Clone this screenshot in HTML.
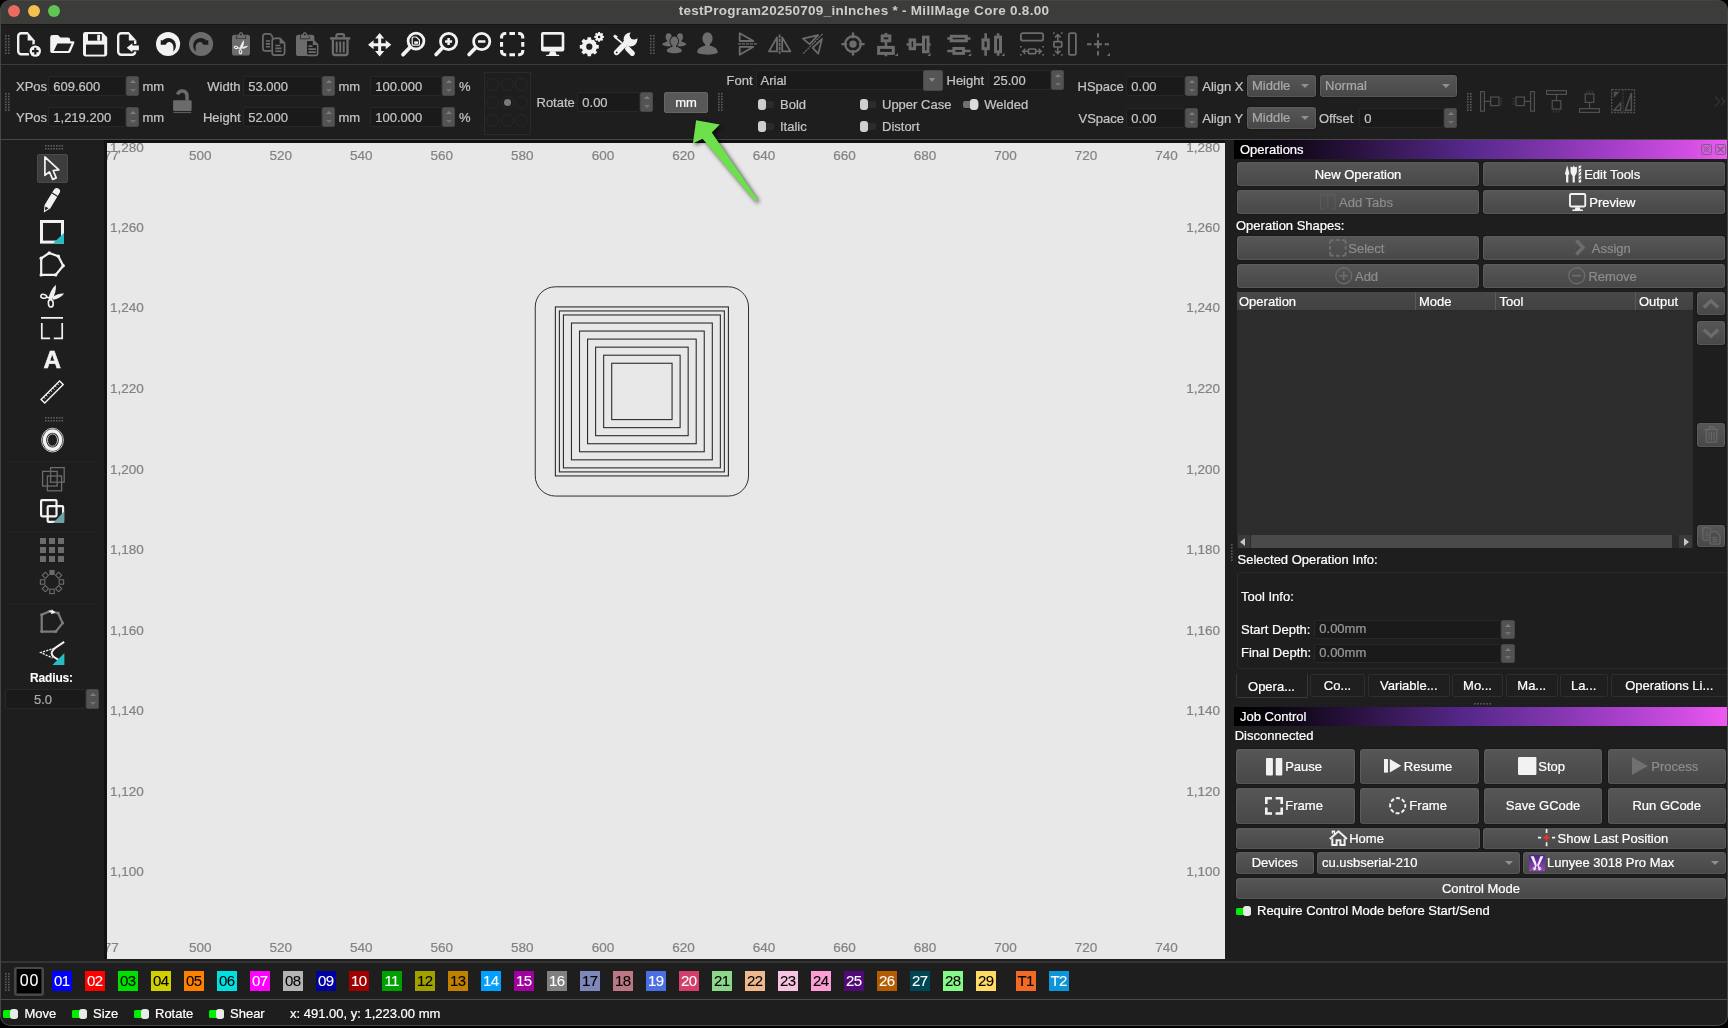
<!DOCTYPE html><html lang="en"><head><meta charset="utf-8"><title>MillMage Core</title><style>
*{box-sizing:border-box;margin:0;padding:0}
html,body{width:1728px;height:1028px;overflow:hidden;background:#000}
body{font-family:"Liberation Sans",sans-serif;font-size:13px;color:#fff;position:relative}
#win{will-change:transform;-webkit-text-stroke:0.22px;position:absolute;left:0;top:0;width:1728px;height:1025.6px;background:#1e1e1e;border-radius:10px 10px 10px 10px;overflow:hidden}
.a{position:absolute}
.t{position:absolute;white-space:nowrap;line-height:20px;height:20px}
.g{color:#c4c4c4}
.inp{position:absolute;background:#1a1a1a;border:1px solid #272727;border-radius:2px;color:#c4c4c4;line-height:19px;padding-left:4px;white-space:nowrap;overflow:hidden}
.sp{position:absolute;background:#535353;border-radius:2px;border:1px solid #474747}
.sp:before,.sp:after{content:"";position:absolute;left:50%;margin-left:-3px;border:3px solid transparent}
.sp:before{top:3px;border-bottom:3.5px solid #7e7e7e;border-top:0}
.sp:after{bottom:3px;border-top:3.5px solid #727272;border-bottom:0}
.btn{position:absolute;background:linear-gradient(#565656,#484848);border-radius:3px;border:1px solid #5d5d5d;border-bottom-color:#575757;box-shadow:0 0 0 1px #181818;color:#fff;display:flex;align-items:center;justify-content:center;white-space:nowrap}
.btn.d{color:#8c8c8c}
.cmb{position:absolute;background:linear-gradient(#565656,#484848);border-radius:3px;border:1px solid #5d5d5d;border-bottom-color:#575757;box-shadow:0 0 0 1px #181818;color:#a8a8a8;line-height:19px;padding-left:4px;white-space:nowrap}
.cmb:after{content:"";position:absolute;right:6px;top:8px;border:4px solid transparent;border-top:4px solid #909090;border-bottom:0}
.hdr{position:absolute;height:19px;background:linear-gradient(90deg,#000 0%,#09040d 8%,#2a1240 25%,#55288a 47%,#7a34a8 62%,#a83fcb 78%,#d24ee3 92%,#ee5af2 100%);line-height:19.5px;padding-left:6px;color:#fff}
.tg{position:absolute;width:16px;height:10.4px}
.tg:before{content:"";position:absolute;left:0.5px;right:0;top:1.5px;height:7.4px;border-radius:2px;background:#2c2c2c}
.tg i{position:absolute;left:0;top:0;width:8.4px;height:10.4px;border-radius:3px;background:#cfcfcf}
.tg.on:before{background:#707070}
.tg.on i{left:7.6px;background:#dcdcdc}
.tg.gr{width:15.6px}
.tg.gr:before{background:#00ee00;border-radius:1.5px}
.tg.gr i{left:7.4px;width:8.2px;background:#e6ebe6}
.rl{position:absolute;color:#838383;white-space:nowrap;line-height:16px;height:16px;font-size:13.5px;margin-top:0.7px}
.sw{position:absolute;top:971px;width:20px;height:20px;line-height:19.8px;text-align:center;font-size:15px;letter-spacing:-0.7px;text-indent:-0.7px;-webkit-text-stroke:0.1px}
.grip{position:absolute;background-image:radial-gradient(circle,#636363 0.85px,transparent 1.15px);background-size:3px 2.7px}
.tab{position:absolute;top:674.3px;height:22.3px;background:#1f1f1f;border:1px solid #2e2e2e;border-radius:2px;text-align:center;line-height:21px;color:#fff;white-space:nowrap}
svg{position:absolute;overflow:visible}
svg.il{position:relative;flex:none;display:block;margin-left:-3px}
</style></head><body><div id="win">
<div class="a" style="left:0;top:0;width:1728px;height:25px;background:#3c3c3a;border-bottom:1.5px solid #151515"></div>
<div class="a" style="left:8.1px;top:5px;width:12.4px;height:12.4px;border-radius:50%;background:#ed6a5e"></div>
<div class="a" style="left:28.0px;top:5px;width:12.4px;height:12.4px;border-radius:50%;background:#f5bf4f"></div>
<div class="a" style="left:48.0px;top:5px;width:12.4px;height:12.4px;border-radius:50%;background:#61c554"></div>
<div class="t" style="left:0;width:1728px;top:1px;text-align:center;font-weight:bold;color:#cdcdcd;font-size:13.5px;letter-spacing:0.28px;-webkit-text-stroke:0;line-height:20px">testProgram20250709_inInches * - MillMage Core 0.8.00</div>
<div class="a" style="left:0;top:64px;width:1728px;height:1px;background:#3c3c3c"></div>
<svg style="left:5.3px;top:35.0px" width="6.0" height="20.3" fill="#5c5c5c"><rect x="0.00" y="0.00" width="1.6" height="1.6"/><rect x="0.00" y="2.90" width="1.6" height="1.6"/><rect x="0.00" y="5.80" width="1.6" height="1.6"/><rect x="0.00" y="8.70" width="1.6" height="1.6"/><rect x="0.00" y="11.60" width="1.6" height="1.6"/><rect x="0.00" y="14.50" width="1.6" height="1.6"/><rect x="0.00" y="17.40" width="1.6" height="1.6"/><rect x="3.00" y="0.00" width="1.6" height="1.6"/><rect x="3.00" y="2.90" width="1.6" height="1.6"/><rect x="3.00" y="5.80" width="1.6" height="1.6"/><rect x="3.00" y="8.70" width="1.6" height="1.6"/><rect x="3.00" y="11.60" width="1.6" height="1.6"/><rect x="3.00" y="14.50" width="1.6" height="1.6"/><rect x="3.00" y="17.40" width="1.6" height="1.6"/></svg>
<svg style="left:650.3px;top:35.0px" width="6.0" height="20.3" fill="#5c5c5c"><rect x="0.00" y="0.00" width="1.6" height="1.6"/><rect x="0.00" y="2.90" width="1.6" height="1.6"/><rect x="0.00" y="5.80" width="1.6" height="1.6"/><rect x="0.00" y="8.70" width="1.6" height="1.6"/><rect x="0.00" y="11.60" width="1.6" height="1.6"/><rect x="0.00" y="14.50" width="1.6" height="1.6"/><rect x="0.00" y="17.40" width="1.6" height="1.6"/><rect x="3.00" y="0.00" width="1.6" height="1.6"/><rect x="3.00" y="2.90" width="1.6" height="1.6"/><rect x="3.00" y="5.80" width="1.6" height="1.6"/><rect x="3.00" y="8.70" width="1.6" height="1.6"/><rect x="3.00" y="11.60" width="1.6" height="1.6"/><rect x="3.00" y="14.50" width="1.6" height="1.6"/><rect x="3.00" y="17.40" width="1.6" height="1.6"/></svg>
<svg style="left:17.3px;top:32px" width="25" height="25" viewBox="0 0 25 25"><path d="M11,1.2H4.2a3,3 0 0 0 -3,3V19.3a3,3 0 0 0 3,3H12 M16.6,8V13" fill="none" stroke="#f2f2f2" stroke-width="2.4"/><path d="M10.6,0.1L17.8,8.4H10.6Z" fill="#f2f2f2"/><circle cx="18.3" cy="19.1" r="7" fill="#1e1e1e"/><circle cx="18.3" cy="19.1" r="5.7" fill="#f2f2f2"/><path d="M18.3,15.8v6.6M15,19.1h6.6" stroke="#1e1e1e" stroke-width="2.2" fill="none"/></svg><svg style="left:50.1px;top:32px" width="25" height="25" viewBox="0 0 25 25"><path d="M0.2,5.4a2.4,2.4 0 0 1 2.4,-2.4H8l2.4,2.6H17.8a2.4,2.4 0 0 1 2.4,2.4V9.3H23.2a1.2,1.2 0 0 1 1.1,1.7L20.4,20a1.8,1.8 0 0 1 -1.6,1.1H2a1.8,1.8 0 0 1 -1.8,-1.8Z" fill="#f2f2f2"/><path d="M7.4,11.6H21.6L18.2,19H3.8Z" fill="#1e1e1e"/></svg><svg style="left:83.2px;top:32px" width="25" height="25" viewBox="0 0 25 25"><path d="M2.4,0H19L24.2,5.2V22a2.4,2.4 0 0 1 -2.4,2.4H2.4A2.4,2.4 0 0 1 0,22V2.4A2.4,2.4 0 0 1 2.4,0Z" fill="#f2f2f2"/><rect x="5" y="2.1" width="13.8" height="6.6" fill="#1e1e1e"/><rect x="14.2" y="2.8" width="2.9" height="5.9" fill="#f2f2f2"/><rect x="3" y="12.6" width="18.2" height="10" fill="#1e1e1e"/></svg><svg style="left:117.3px;top:32px" width="25" height="25" viewBox="0 0 25 25"><path d="M12,1.2H4.2a3,3 0 0 0 -3,3V19.8a3,3 0 0 0 3,3H15.2a3,3 0 0 0 3,-3V19.5 M18.2,8.6V12" fill="none" stroke="#f2f2f2" stroke-width="2.4"/><path d="M11.8,0.1L19.4,8.6H11.8Z" fill="#f2f2f2"/><path d="M9.7,15.8L15.4,11.3V13.4H21.9v4.8H15.4V20.3Z" fill="#f2f2f2" stroke="#1e1e1e" stroke-width="1.6" paint-order="stroke" stroke-linejoin="round"/></svg><svg style="left:156.15px;top:32px" width="25" height="25" viewBox="0 0 25 25"><circle cx="12.05" cy="12" r="12.05" fill="#f2f2f2"/><path d="M4.85,8.07L4.67,12.74L9.69,12.74C10.5,11 11.6,9.9 12.9,9.9C15.6,9.9 17.6,12.4 17.4,15.6C17.4,17 17.4,18.5 17.4,19.7C19,17.8 20,15.6 19.9,13.4C19.6,9 16.4,6.1 12.2,6.1C10,6.1 8,7 6.6,8.6Z" fill="#1e1e1e"/></svg><svg style="left:189.15px;top:32px" width="25" height="25" viewBox="0 0 25 25"><circle cx="12.05" cy="12" r="12.05" fill="#6c6c6c"/><path d="M4.85,8.07L4.67,12.74L9.69,12.74C10.5,11 11.6,9.9 12.9,9.9C15.6,9.9 17.6,12.4 17.4,15.6C17.4,17 17.4,18.5 17.4,19.7C19,17.8 20,15.6 19.9,13.4C19.6,9 16.4,6.1 12.2,6.1C10,6.1 8,7 6.6,8.6Z" fill="#1e1e1e" transform="translate(24.1,0) scale(-1,1)"/></svg><svg style="left:231.95px;top:32.2px" width="20" height="25" viewBox="0 0 20 25"><rect x="0" y="2.8" width="18" height="20.8" rx="2.6" fill="#6c6c6c"/><path d="M4.6,6.4L5.4,2.6H6.8a2.2,2.6 0 0 1 4.4,0h1.4L13.4,6.4Z" fill="#6c6c6c" stroke="#1e1e1e" stroke-width="1.1" paint-order="stroke" stroke-linejoin="round"/><circle cx="9" cy="2.4" r="0.9" fill="#1e1e1e"/><path d="M12,8C9.9,10.3 8.6,13.2 7.9,15.9L9.9,16.7C11.4,14 12.2,11.2 12,8Z" fill="#f2f2f2"/><path d="M16.1,13.8C13.9,13.8 12,14.6 10.2,15.5L10.7,17C13,16.5 14.8,15.6 16.1,13.8Z" fill="#f2f2f2"/><ellipse cx="3.95" cy="15.4" rx="1.7" ry="1.15" fill="none" stroke="#f2f2f2" stroke-width="1.1" transform="rotate(12 3.95 15.4)"/><ellipse cx="8.45" cy="19.7" rx="1.3" ry="1.9" fill="none" stroke="#f2f2f2" stroke-width="1.1" transform="rotate(-8 8.45 19.7)"/><path d="M5.6,15.9L8.8,16.3M8.3,17.7L8.9,16.2" stroke="#f2f2f2" stroke-width="1.2" fill="none"/></svg><svg style="left:262.3px;top:32.7px" width="25" height="25" viewBox="0 0 25 25"><path d="M7,0.9H3.3a2.4,2.4 0 0 0 -2.4,2.4V15.5a2.4,2.4 0 0 0 2.4,2.4H9.4" fill="none" stroke="#6c6c6c" stroke-width="1.7"/><path d="M7,0.9C8.4,1 9.2,1.6 9.8,2.6" fill="none" stroke="#6c6c6c" stroke-width="1.7"/><path d="M8.3,3.8L11.4,2.2L10.9,5.3Z" fill="#6c6c6c"/><path d="M3.9,8h4.2M3.9,10.9h4.2M3.9,13.8h4.2" stroke="#6c6c6c" stroke-width="1.6"/><path d="M18.0,5.4H12.6a2.4,2.4 0 0 0 -2.4,2.4V19.800000000000004a2.4,2.4 0 0 0 2.4,2.4H20.200000000000003a2.4,2.4 0 0 0 2.4,-2.4V10.0Z" fill="#1e1e1e" stroke="#6c6c6c" stroke-width="1.7" stroke-linejoin="round"/><path d="M17.6,5.4V10.4H22.6Z" fill="#6c6c6c"/><path d="M13.299999999999999,12.456h5.0M13.299999999999999,15.356h6.2M13.299999999999999,18.256h6.2" stroke="#6c6c6c" stroke-width="1.6" fill="none"/></svg><svg style="left:296.1px;top:32px" width="24" height="25" viewBox="0 0 24 25"><rect x="0" y="2.8" width="18.4" height="21.2" rx="2.6" fill="#6c6c6c"/><path d="M4.4,6.6L5.2,2.6H6.6a2.2,2.6 0 0 1 4.4,0h1.4L13.2,6.6Z" fill="#6c6c6c" stroke="#1e1e1e" stroke-width="1.1" paint-order="stroke" stroke-linejoin="round"/><circle cx="8.8" cy="2.4" r="0.9" fill="#1e1e1e"/><path d="M17.2,8.2H11.8a1.6,1.6 0 0 0 -1.6,1.6V21.8a1.6,1.6 0 0 0 1.6,1.6H20a1.6,1.6 0 0 0 1.6,-1.6V12.6Z" fill="#1e1e1e" stroke="#6c6c6c" stroke-width="1.6" stroke-linejoin="round"/><path d="M16.8,8.2V13H21.6Z" fill="#6c6c6c"/><path d="M12.4,14.2h4M12.4,17.2h7.4M12.4,20.2h7.4" stroke="#6c6c6c" stroke-width="1.7"/></svg><svg style="left:330.3px;top:32.8px" width="21" height="24" viewBox="0 0 21 24"><path d="M0.1,5.4H20.3" fill="none" stroke="#6c6c6c" stroke-width="2.5"/><path d="M6.4,4.4V2.8a1.6,1.6 0 0 1 1.6,-1.6H12.4a1.6,1.6 0 0 1 1.6,1.6V4.4" fill="none" stroke="#6c6c6c" stroke-width="2.3"/><path d="M2.9,6.6V20a2,2 0 0 0 2,2H15.5a2,2 0 0 0 2,-2V6.6" fill="none" stroke="#6c6c6c" stroke-width="2.3"/><path d="M6.7,8.6V19.4M10.2,8.6V19.4M13.7,8.6V19.4" stroke="#6c6c6c" stroke-width="2"/></svg><svg style="left:368.4px;top:32.5px" width="24" height="24" viewBox="0 0 24 24"><path d="M11.65,3V20.5M3,11.75H20.4" stroke="#f2f2f2" stroke-width="3"/><path d="M11.65,0L16.2,5.6H7.1ZM11.65,23.5L16.2,17.9H7.1ZM0,11.75L5.6,7.2V16.3ZM23.3,11.75L17.7,7.2V16.3Z" fill="#f2f2f2"/></svg><svg style="left:401px;top:32px" width="25" height="25" viewBox="0 0 25 25"><circle cx="15" cy="9.1" r="7.9" fill="none" stroke="#f2f2f2" stroke-width="2.8"/><line x1="9.10" y1="15.22" x2="2" y2="22.6" stroke="#f2f2f2" stroke-width="3.7" stroke-linecap="round"/><path d="M12.2,5H15.4L18.4,8V12.2a1,1 0 0 1 -1,1H12.2a1,1 0 0 1 -1,-1V6a1,1 0 0 1 1,-1Z" fill="none" stroke="#f2f2f2" stroke-width="1.2"/><path d="M13.2,9.4h3.8v2.4h-3.8z" fill="#f2f2f2"/></svg><svg style="left:434px;top:32px" width="25" height="25" viewBox="0 0 25 25"><circle cx="14.6" cy="9.5" r="8.1" fill="none" stroke="#f2f2f2" stroke-width="2.8"/><line x1="8.57" y1="15.77" x2="2.1" y2="22.5" stroke="#f2f2f2" stroke-width="3.7" stroke-linecap="round"/><path d="M14.6,6v7M11.1,9.5h7" stroke="#f2f2f2" stroke-width="2.5"/></svg><svg style="left:466.9px;top:32px" width="25" height="25" viewBox="0 0 25 25"><circle cx="14.7" cy="9.5" r="8.1" fill="none" stroke="#f2f2f2" stroke-width="2.8"/><line x1="8.65" y1="15.75" x2="2.1" y2="22.5" stroke="#f2f2f2" stroke-width="3.7" stroke-linecap="round"/><path d="M11,9.5h7.4" stroke="#f2f2f2" stroke-width="2.5"/></svg><svg style="left:500px;top:32px" width="25" height="25" viewBox="0 0 25 25"><path d="M1.55,6.6V5a3.45,3.45 0 0 1 3.45,-3.45H6.2M9.4,1.55H15M18.1,1.55H19.3a3.45,3.45 0 0 1 3.45,3.45V6.6M22.75,10.1V14.7M22.75,18V19.3a3.45,3.45 0 0 1 -3.45,3.45H18.1M15,22.75H9.4M6.2,22.75H5a3.45,3.45 0 0 1 -3.45,-3.45V18M1.55,14.7V10.1" fill="none" stroke="#f2f2f2" stroke-width="3.1"/></svg><svg style="left:540.6px;top:31.9px" width="24" height="25" viewBox="0 0 24 25"><rect x="0" y="0" width="23.3" height="19.5" rx="2" fill="#f2f2f2"/><rect x="2.5" y="2.7" width="18.2" height="12" fill="#1e1e1e"/><path d="M9.2,19.3H14.4L15.6,22.7H17.6a0.7,0.7 0 0 1 0,1.4H5.8a0.7,0.7 0 0 1 0,-1.4H7.8Z" fill="#f2f2f2"/></svg><svg style="left:579px;top:31px" width="28" height="27" viewBox="0 0 28 27"><path d="M-2.80,0L-1.70,-9.50H1.70L2.80,0Z" transform="translate(10.3 15.7) rotate(0.0)" fill="#f2f2f2"/><path d="M-2.80,0L-1.70,-9.50H1.70L2.80,0Z" transform="translate(10.3 15.7) rotate(45.0)" fill="#f2f2f2"/><path d="M-2.80,0L-1.70,-9.50H1.70L2.80,0Z" transform="translate(10.3 15.7) rotate(90.0)" fill="#f2f2f2"/><path d="M-2.80,0L-1.70,-9.50H1.70L2.80,0Z" transform="translate(10.3 15.7) rotate(135.0)" fill="#f2f2f2"/><path d="M-2.80,0L-1.70,-9.50H1.70L2.80,0Z" transform="translate(10.3 15.7) rotate(180.0)" fill="#f2f2f2"/><path d="M-2.80,0L-1.70,-9.50H1.70L2.80,0Z" transform="translate(10.3 15.7) rotate(225.0)" fill="#f2f2f2"/><path d="M-2.80,0L-1.70,-9.50H1.70L2.80,0Z" transform="translate(10.3 15.7) rotate(270.0)" fill="#f2f2f2"/><path d="M-2.80,0L-1.70,-9.50H1.70L2.80,0Z" transform="translate(10.3 15.7) rotate(315.0)" fill="#f2f2f2"/><circle cx="10.3" cy="15.7" r="7.5" fill="#f2f2f2"/><circle cx="10.3" cy="15.7" r="3.1" fill="#1e1e1e"/><circle cx="20.1" cy="5.9" r="6" fill="#1e1e1e"/><path d="M-1.60,0L-0.90,-4.90H0.90L1.60,0Z" transform="translate(20.1 5.9) rotate(0.0)" fill="#f2f2f2"/><path d="M-1.60,0L-0.90,-4.90H0.90L1.60,0Z" transform="translate(20.1 5.9) rotate(45.0)" fill="#f2f2f2"/><path d="M-1.60,0L-0.90,-4.90H0.90L1.60,0Z" transform="translate(20.1 5.9) rotate(90.0)" fill="#f2f2f2"/><path d="M-1.60,0L-0.90,-4.90H0.90L1.60,0Z" transform="translate(20.1 5.9) rotate(135.0)" fill="#f2f2f2"/><path d="M-1.60,0L-0.90,-4.90H0.90L1.60,0Z" transform="translate(20.1 5.9) rotate(180.0)" fill="#f2f2f2"/><path d="M-1.60,0L-0.90,-4.90H0.90L1.60,0Z" transform="translate(20.1 5.9) rotate(225.0)" fill="#f2f2f2"/><path d="M-1.60,0L-0.90,-4.90H0.90L1.60,0Z" transform="translate(20.1 5.9) rotate(270.0)" fill="#f2f2f2"/><path d="M-1.60,0L-0.90,-4.90H0.90L1.60,0Z" transform="translate(20.1 5.9) rotate(315.0)" fill="#f2f2f2"/><circle cx="20.1" cy="5.9" r="3.6" fill="#f2f2f2"/><circle cx="20.1" cy="5.9" r="1.25" fill="#1e1e1e"/></svg><svg style="left:613px;top:32px" width="25" height="25" viewBox="0 0 25 25"><defs><mask id="wm" maskUnits="userSpaceOnUse" x="-5" y="-5" width="40" height="40"><rect x="-2" y="-2" width="30" height="30" fill="#fff"/><circle cx="21" cy="3.2" r="4.3" fill="#000"/><circle cx="3.7" cy="20.4" r="0.9" fill="#000"/></mask></defs><g mask="url(#wm)"><path d="M3.7,20.4L15,8.6" stroke="#f2f2f2" stroke-width="5.6" stroke-linecap="round"/><circle cx="17.5" cy="7.5" r="6.9" fill="#f2f2f2"/></g><path d="M1.6,4.9L8.8,10.9" stroke="#f2f2f2" stroke-width="1.8"/><path d="M0.5,4.3L1.8,2.9L4.4,4.6L3,6.4Z" fill="#f2f2f2" stroke="#f2f2f2" stroke-width="0.8" stroke-linejoin="round"/><path d="M14.6,16.6L19.3,21.3" stroke="#f2f2f2" stroke-width="5.2" stroke-linecap="round"/></svg><svg style="left:662px;top:33.4px" width="25" height="22" viewBox="0 0 25 22"><ellipse cx="6.6" cy="4.0" rx="3" ry="3.7" fill="#6c6c6c"/><path d="M5.25,6.1V8.3C3.3999999999999995,9.5 0.1999999999999993,10.1 0.1999999999999993,11.3C2.12,14.100000000000001 11.079999999999998,14.100000000000001 13.0,11.3C13.0,10.1 9.8,9.5 7.949999999999999,8.3V6.1Z" fill="#6c6c6c"/><ellipse cx="18" cy="4.0" rx="3" ry="3.7" fill="#6c6c6c"/><path d="M16.65,6.1V8.3C14.8,9.5 11.6,10.1 11.6,11.3C13.52,14.100000000000001 22.48,14.100000000000001 24.4,11.3C24.4,10.1 21.2,9.5 19.35,8.3V6.1Z" fill="#6c6c6c"/><ellipse cx="12.3" cy="8.3" rx="3.9" ry="4.7" fill="#1e1e1e" stroke="#1e1e1e" stroke-width="1.8"/><path d="M10.545000000000002,11.4V13.6C8.5,14.8 4.700000000000001,15.4 4.700000000000001,18.2C6.980000000000001,21.0 17.62,21.0 19.9,18.2C19.9,15.4 16.1,14.8 14.055,13.6V11.4Z" fill="#1e1e1e" stroke="#1e1e1e" stroke-width="1.8"/><ellipse cx="12.3" cy="8.3" rx="3.9" ry="4.7" fill="#6c6c6c"/><path d="M10.545000000000002,11.4V13.6C8.5,14.8 4.700000000000001,15.4 4.700000000000001,18.2C6.980000000000001,21.0 17.62,21.0 19.9,18.2C19.9,15.4 16.1,14.8 14.055,13.6V11.4Z" fill="#6c6c6c"/></svg><svg style="left:696.9px;top:31.6px" width="22" height="25" viewBox="0 0 22 25"><ellipse cx="10.5" cy="6.5" rx="5.1" ry="6.3" fill="#6c6c6c"/><path d="M8.205,11.2V13.399999999999999C5.35,14.6 0.1999999999999993,15.2 0.1999999999999993,20.6C3.29,23.400000000000002 17.71,23.400000000000002 20.8,20.6C20.8,15.2 15.65,14.6 12.795,13.399999999999999V11.2Z" fill="#6c6c6c"/></svg><svg style="left:737.8px;top:32.3px" width="20" height="24" viewBox="0 0 20 24"><path d="M1.7,1.3V9H15.4ZM1.7,22.7V14.8H15.4Z" fill="none" stroke="#6c6c6c" stroke-width="1.8" stroke-linejoin="round"/><path d="M0,11.9H19" stroke="#6c6c6c" stroke-width="1.3" stroke-dasharray="3.2 0.8"/></svg><svg style="left:768.2px;top:32.3px" width="24" height="24" viewBox="0 0 24 24"><path d="M9,5.4V19.4H1ZM14.2,5.4V19.4H22.4Z" fill="none" stroke="#6c6c6c" stroke-width="1.8" stroke-linejoin="round"/><path d="M11.6,2.6V21.7" stroke="#6c6c6c" stroke-width="1.8" stroke-dasharray="3.4 0.7"/></svg><svg style="left:802px;top:32.3px" width="24" height="24" viewBox="0 0 24 24"><path d="M0.9,6.65L16.2,3.2L7.5,12.15ZM20,6.9L10.7,15.9L16.2,21.7Z" fill="none" stroke="#6c6c6c" stroke-width="1.7" stroke-linejoin="round"/><path d="M20.6,1.9L1.2,21.7" stroke="#6c6c6c" stroke-width="1.2" stroke-dasharray="2.4 0.8"/></svg><svg style="left:841px;top:32px" width="24" height="24" viewBox="0 0 24 24"><circle cx="12" cy="12.1" r="7.8" fill="none" stroke="#6c6c6c" stroke-width="2.4"/><circle cx="12" cy="12.1" r="3.7" fill="#6c6c6c"/><path d="M12,0.6V6.2M12,18V23.6M0.4,12.1H6.1M17.9,12.1H23.6" stroke="#6c6c6c" stroke-width="2.4"/></svg><svg style="left:877px;top:32.5px" width="22" height="24" viewBox="0 0 22 24"><path d="M8.95,-0.1V23.3" stroke="#6c6c6c" stroke-width="2.6"/><rect x="5.2" y="2.9" width="7.6" height="4.9" fill="#1e1e1e" stroke="#6c6c6c" stroke-width="3"/><rect x="1.6" y="14.4" width="14.7" height="6" fill="#1e1e1e" stroke="#6c6c6c" stroke-width="3"/><path d="M21,23.1V19.900000000000002L17.8,23.1Z" fill="#6c6c6c"/></svg><svg style="left:907.4px;top:32.5px" width="24" height="24" viewBox="0 0 24 24"><path d="M-0.4,11.5H23.6" stroke="#6c6c6c" stroke-width="2.6"/><rect x="3.1" y="6.9" width="4.5" height="8.8" fill="#1e1e1e" stroke="#6c6c6c" stroke-width="3"/><rect x="16.5" y="4.1" width="4.5" height="14.7" fill="#1e1e1e" stroke="#6c6c6c" stroke-width="3"/><path d="M23.6,23.1V19.900000000000002L20.400000000000002,23.1Z" fill="#6c6c6c"/></svg><svg style="left:946.9px;top:32.5px" width="24" height="24" viewBox="0 0 24 24"><path d="M0.3,5.5H23.5M0.3,18H23.5" stroke="#6c6c6c" stroke-width="2.6"/><rect x="4.2" y="3.3" width="15.1" height="4.5" fill="#1e1e1e" stroke="#6c6c6c" stroke-width="3"/><rect x="6.9" y="15.5" width="9.6" height="4.9" fill="#1e1e1e" stroke="#6c6c6c" stroke-width="3"/><path d="M24.2,23.1V19.900000000000002L21.0,23.1Z" fill="#6c6c6c"/></svg><svg style="left:981.3px;top:32.5px" width="24" height="24" viewBox="0 0 24 24"><path d="M4.65,0.3V22.7M17.1,0.3V22.7" stroke="#6c6c6c" stroke-width="2.6"/><rect x="2" y="6.9" width="5.3" height="8.8" fill="#1e1e1e" stroke="#6c6c6c" stroke-width="3"/><rect x="14.6" y="4.1" width="4.9" height="14.7" fill="#1e1e1e" stroke="#6c6c6c" stroke-width="3"/><path d="M23.6,23.1V19.900000000000002L20.400000000000002,23.1Z" fill="#6c6c6c"/></svg><svg style="left:1020px;top:32px" width="24" height="24" viewBox="0 0 24 24"><rect x="0.9" y="1.1" width="22.2" height="7.6" rx="2" fill="none" stroke="#6c6c6c" stroke-width="1.8"/><rect x="0" y="14" width="1.6" height="1.6" fill="#6c6c6c"/><rect x="22.4" y="14" width="1.6" height="1.6" fill="#6c6c6c"/><rect x="0" y="22" width="1.6" height="1.6" fill="#6c6c6c"/><rect x="22.4" y="22" width="1.6" height="1.6" fill="#6c6c6c"/><rect x="8.4" y="17" width="7.4" height="4.6" rx="0.8" fill="none" stroke="#6c6c6c" stroke-width="1.7"/><path d="M3,19.3H8M16,19.3H21M5.4,16.7L2.8,19.3L5.4,21.9M18.6,16.7L21.2,19.3L18.6,21.9" fill="none" stroke="#6c6c6c" stroke-width="1.5"/></svg><svg style="left:1053px;top:32px" width="24" height="24" viewBox="0 0 24 24"><rect x="0" y="0.3" width="1.6" height="1.6" fill="#6c6c6c"/><rect x="8" y="0.3" width="1.6" height="1.6" fill="#6c6c6c"/><rect x="0" y="22.2" width="1.6" height="1.6" fill="#6c6c6c"/><rect x="8" y="22.2" width="1.6" height="1.6" fill="#6c6c6c"/><rect x="0.9" y="9.6" width="7.8" height="5.4" rx="0.8" fill="none" stroke="#6c6c6c" stroke-width="1.7"/><path d="M4.8,2.6V9M4.8,15.6V21.6M2,5.4L4.8,2.6L7.6,5.4M2,18.8L4.8,21.6L7.6,18.8" fill="none" stroke="#6c6c6c" stroke-width="1.5"/><rect x="15.9" y="1.1" width="7" height="21.8" rx="1.5" fill="none" stroke="#6c6c6c" stroke-width="1.8"/></svg><svg style="left:1086px;top:32px" width="25" height="25" viewBox="0 0 25 25"><path d="M8,12.25H16M12,8.2V16.3" stroke="#6c6c6c" stroke-width="2.2"/><path d="M1,12.25H5.4M18.6,12.25H23M12,1.2V5.6M12,19V23.6" stroke="#6c6c6c" stroke-width="1.9"/><path d="M24,24V20.8L20.8,24Z" fill="#6c6c6c"/></svg>
<div class="a" style="left:0;top:139px;width:1728px;height:1px;background:#474747"></div>
<svg style="left:5.3px;top:93.0px" width="6.0" height="19.1" fill="#5c5c5c"><rect x="0.00" y="0.00" width="1.6" height="1.6"/><rect x="0.00" y="2.73" width="1.6" height="1.6"/><rect x="0.00" y="5.46" width="1.6" height="1.6"/><rect x="0.00" y="8.19" width="1.6" height="1.6"/><rect x="0.00" y="10.92" width="1.6" height="1.6"/><rect x="0.00" y="13.65" width="1.6" height="1.6"/><rect x="0.00" y="16.38" width="1.6" height="1.6"/><rect x="3.00" y="0.00" width="1.6" height="1.6"/><rect x="3.00" y="2.73" width="1.6" height="1.6"/><rect x="3.00" y="5.46" width="1.6" height="1.6"/><rect x="3.00" y="8.19" width="1.6" height="1.6"/><rect x="3.00" y="10.92" width="1.6" height="1.6"/><rect x="3.00" y="13.65" width="1.6" height="1.6"/><rect x="3.00" y="16.38" width="1.6" height="1.6"/></svg>
<svg style="left:718.3px;top:93.0px" width="6.0" height="19.1" fill="#5c5c5c"><rect x="0.00" y="0.00" width="1.6" height="1.6"/><rect x="0.00" y="2.73" width="1.6" height="1.6"/><rect x="0.00" y="5.46" width="1.6" height="1.6"/><rect x="0.00" y="8.19" width="1.6" height="1.6"/><rect x="0.00" y="10.92" width="1.6" height="1.6"/><rect x="0.00" y="13.65" width="1.6" height="1.6"/><rect x="0.00" y="16.38" width="1.6" height="1.6"/><rect x="3.00" y="0.00" width="1.6" height="1.6"/><rect x="3.00" y="2.73" width="1.6" height="1.6"/><rect x="3.00" y="5.46" width="1.6" height="1.6"/><rect x="3.00" y="8.19" width="1.6" height="1.6"/><rect x="3.00" y="10.92" width="1.6" height="1.6"/><rect x="3.00" y="13.65" width="1.6" height="1.6"/><rect x="3.00" y="16.38" width="1.6" height="1.6"/></svg>
<svg style="left:1467.3px;top:93.0px" width="6.0" height="19.1" fill="#5c5c5c"><rect x="0.00" y="0.00" width="1.6" height="1.6"/><rect x="0.00" y="2.73" width="1.6" height="1.6"/><rect x="0.00" y="5.46" width="1.6" height="1.6"/><rect x="0.00" y="8.19" width="1.6" height="1.6"/><rect x="0.00" y="10.92" width="1.6" height="1.6"/><rect x="0.00" y="13.65" width="1.6" height="1.6"/><rect x="0.00" y="16.38" width="1.6" height="1.6"/><rect x="3.00" y="0.00" width="1.6" height="1.6"/><rect x="3.00" y="2.73" width="1.6" height="1.6"/><rect x="3.00" y="5.46" width="1.6" height="1.6"/><rect x="3.00" y="8.19" width="1.6" height="1.6"/><rect x="3.00" y="10.92" width="1.6" height="1.6"/><rect x="3.00" y="13.65" width="1.6" height="1.6"/><rect x="3.00" y="16.38" width="1.6" height="1.6"/></svg>
<div class="t g" style="left:16px;top:76.5px;">XPos</div>
<div class="inp" style="left:48.3px;top:76px;width:77.7px;height:20px;">609.600</div>
<div class="sp" style="left:126px;top:76px;width:13px;height:20px"></div>
<div class="t g" style="left:142.5px;top:76.5px;">mm</div>
<div class="t g" style="left:16px;top:107.5px;">YPos</div>
<div class="inp" style="left:48.3px;top:107px;width:77.7px;height:20px;">1,219.200</div>
<div class="sp" style="left:126px;top:107px;width:13px;height:20px"></div>
<div class="t g" style="left:142.5px;top:107.5px;">mm</div>
<div class="t g" style="right:1487.5px;top:76.5px;">Width</div>
<div class="inp" style="left:243.3px;top:76px;width:78.7px;height:20px;">53.000</div>
<div class="sp" style="left:322px;top:76px;width:13px;height:20px"></div>
<div class="t g" style="left:338.5px;top:76.5px;">mm</div>
<div class="inp" style="left:370.3px;top:76px;width:71.7px;height:20px;">100.000</div>
<div class="sp" style="left:442px;top:76px;width:13px;height:20px"></div>
<div class="t g" style="left:459px;top:76.5px;">%</div>
<div class="t g" style="right:1487.5px;top:107.5px;">Height</div>
<div class="inp" style="left:243.3px;top:107px;width:78.7px;height:20px;">52.000</div>
<div class="sp" style="left:322px;top:107px;width:13px;height:20px"></div>
<div class="t g" style="left:338.5px;top:107.5px;">mm</div>
<div class="inp" style="left:370.3px;top:107px;width:71.7px;height:20px;">100.000</div>
<div class="sp" style="left:442px;top:107px;width:13px;height:20px"></div>
<div class="t g" style="left:459px;top:107.5px;">%</div>
<div class="a" style="left:484px;top:72px;width:47px;height:63px;border:1px solid #2a2a2a"></div>
<div class="a" style="left:486.1px;top:77.5px;width:13px;height:13px;border-radius:50%;border:1px solid #282828"></div>
<div class="a" style="left:486.1px;top:95.7px;width:13px;height:13px;border-radius:50%;border:1px solid #282828"></div>
<div class="a" style="left:486.1px;top:113.5px;width:13px;height:13px;border-radius:50%;border:1px solid #282828"></div>
<div class="a" style="left:500.5px;top:77.5px;width:13px;height:13px;border-radius:50%;border:1px solid #282828"></div>
<div class="a" style="left:500.5px;top:95.7px;width:13px;height:13px;border-radius:50%;border:1px solid #282828"></div>
<div class="a" style="left:500.5px;top:113.5px;width:13px;height:13px;border-radius:50%;border:1px solid #282828"></div>
<div class="a" style="left:514.8px;top:77.5px;width:13px;height:13px;border-radius:50%;border:1px solid #282828"></div>
<div class="a" style="left:514.8px;top:95.7px;width:13px;height:13px;border-radius:50%;border:1px solid #282828"></div>
<div class="a" style="left:514.8px;top:113.5px;width:13px;height:13px;border-radius:50%;border:1px solid #282828"></div>
<div class="a" style="left:503.5px;top:98.7px;width:7px;height:7px;border-radius:50%;background:#7a7a7a"></div>
<div class="t g" style="left:536.5px;top:92.5px;">Rotate</div>
<div class="inp" style="left:577.3px;top:92px;width:62.7px;height:20px;">0.00</div>
<div class="sp" style="left:640px;top:92px;width:13px;height:20px"></div>
<div class="btn" style="left:664px;top:91.5px;width:44px;height:21.5px;background:#585858;border-color:#666;box-shadow:none;border-radius:2px">mm</div>
<div class="t g" style="left:726.5px;top:70.5px;">Font</div>
<div class="inp" style="left:755.5px;top:70px;width:168px;height:20px">Arial</div>
<div class="a" style="left:923px;top:70px;width:20px;height:20.5px;background:#555;border:1px solid #484848;border-radius:2px"></div>
<div class="a" style="left:929.3px;top:78.4px;border:3.8px solid transparent;border-top:4px solid #8c8c8c;border-bottom:0"></div>
<div class="t g" style="left:946.5px;top:70.5px;">Height</div>
<div class="inp" style="left:988.3px;top:70px;width:62.7px;height:20px;">25.00</div>
<div class="sp" style="left:1051px;top:70px;width:13px;height:20px"></div>
<div class="tg " style="left:758px;top:99.3px"><i></i></div>
<div class="t g" style="left:780px;top:94.5px;">Bold</div>
<div class="tg " style="left:758px;top:121.3px"><i></i></div>
<div class="t g" style="left:780px;top:116.5px;">Italic</div>
<div class="tg " style="left:860px;top:99.3px"><i></i></div>
<div class="t g" style="left:882px;top:94.5px;">Upper Case</div>
<div class="tg " style="left:860px;top:121.3px"><i></i></div>
<div class="t g" style="left:882px;top:116.5px;">Distort</div>
<div class="tg on" style="left:962.5px;top:99.3px"><i></i></div>
<div class="t g" style="left:984.3px;top:94.5px;">Welded</div>
<div class="t g" style="left:1077.5px;top:76.5px;">HSpace</div>
<div class="inp" style="left:1126.3px;top:76px;width:58.7px;height:20px;">0.00</div>
<div class="sp" style="left:1185px;top:76px;width:13px;height:20px"></div>
<div class="t g" style="left:1078.5px;top:108.5px;">VSpace</div>
<div class="inp" style="left:1126.3px;top:108px;width:58.7px;height:20px;">0.00</div>
<div class="sp" style="left:1185px;top:108px;width:13px;height:20px"></div>
<div class="t g" style="left:1202.3px;top:76.5px;">Align X</div>
<div class="t g" style="left:1202.3px;top:108.5px;">Align Y</div>
<div class="cmb" style="left:1247px;top:75px;width:69px;height:21.5px">Middle</div>
<div class="cmb" style="left:1247px;top:107px;width:69px;height:21.5px">Middle</div>
<div class="cmb" style="left:1320px;top:75px;width:137px;height:21.5px">Normal</div>
<div class="t g" style="left:1319px;top:108.5px;">Offset</div>
<div class="inp" style="left:1359.3px;top:108px;width:84.7px;height:20px;">0</div>
<div class="sp" style="left:1444px;top:108px;width:13px;height:20px"></div>
<svg style="left:173px;top:89px" width="20" height="26" viewBox="0 0 20 26"><path d="M4.7,5.5A4.75,4.75 0 0 1 14,6.2V11.6" fill="none" stroke="#6b6b6b" stroke-width="3.5"/><rect x="0.1" y="11.2" width="18.5" height="10.7" rx="0.8" fill="#6b6b6b"/><rect x="0.4" y="22.9" width="17.9" height="1.2" fill="#5a5a5a"/></svg><svg style="left:1479.7px;top:90.9px" width="24" height="21" viewBox="0 0 24 21"><rect x="0.6" y="0.6" width="3.8" height="19.6" fill="none" stroke="#505050" stroke-width="1.2"/><path d="M4.4,10.4H10.4" stroke="#505050" stroke-width="1.2"/><rect x="10.6" y="6" width="8.4" height="8.6" fill="none" stroke="#505050" stroke-width="1.2"/><path d="M19.6,7.6h3M19.6,10.3h3M19.6,13h3" stroke="#3c3c3c" stroke-width="0.9"/></svg><svg style="left:1512px;top:90.9px" width="24" height="21" viewBox="0 0 24 21"><rect x="18.6" y="0.6" width="3.8" height="19.6" fill="none" stroke="#505050" stroke-width="1.2"/><path d="M12.6,10.4H18.6" stroke="#505050" stroke-width="1.2"/><rect x="4" y="6" width="8.4" height="8.6" fill="none" stroke="#505050" stroke-width="1.2"/><path d="M0.4,7.6h3M0.4,10.3h3M0.4,13h3" stroke="#3c3c3c" stroke-width="0.9"/></svg><svg style="left:1546px;top:89.7px" width="22" height="24" viewBox="0 0 22 24"><rect x="0.6" y="0.6" width="19.8" height="3.8" fill="none" stroke="#505050" stroke-width="1.2"/><path d="M10.5,4.4V10.4" stroke="#505050" stroke-width="1.2"/><rect x="6.2" y="10.6" width="8.6" height="8.4" fill="none" stroke="#505050" stroke-width="1.2"/><path d="M7.8,19.6v3M10.5,19.6v3M13.2,19.6v3" stroke="#3c3c3c" stroke-width="0.9"/></svg><svg style="left:1579px;top:89.7px" width="22" height="24" viewBox="0 0 22 24"><rect x="0.6" y="18.6" width="19.8" height="3.8" fill="none" stroke="#505050" stroke-width="1.2"/><path d="M10.5,12.6V18.6" stroke="#505050" stroke-width="1.2"/><rect x="6.2" y="4" width="8.6" height="8.4" fill="none" stroke="#505050" stroke-width="1.2"/><path d="M7.8,0.4v3M10.5,0.4v3M13.2,0.4v3" stroke="#3c3c3c" stroke-width="0.9"/></svg><svg style="left:1611px;top:89px" width="25" height="25" viewBox="0 0 25 25"><rect x="0.7" y="0.7" width="22.8" height="22.8" fill="none" stroke="#505050" stroke-width="1.3" stroke-dasharray="2.2 1"/><path d="M12,0.7V23.5" stroke="#444" stroke-width="1" stroke-dasharray="2 1"/><path d="M2.8,2.8H8.6L2.8,8.8Z" fill="#505050"/><path d="M3,21.2H9.6V14Z" fill="none" stroke="#505050" stroke-width="1.4"/><path d="M14.4,21.2H20.4V4Z" fill="none" stroke="#505050" stroke-width="1.5"/></svg><svg style="left:1714px;top:95px" width="12" height="14" viewBox="0 0 12 14"><path d="M1,1.6L5.6,6.6L1,11.6M7,2.6L10.6,6.6L7,10.6" fill="none" stroke="#333" stroke-width="1.4"/></svg>
<svg style="left:45.0px;top:145.0px" width="19.2" height="6.0" fill="#5c5c5c"><rect x="0.00" y="0.00" width="1.6" height="1.6"/><rect x="0.00" y="3.00" width="1.6" height="1.6"/><rect x="2.75" y="0.00" width="1.6" height="1.6"/><rect x="2.75" y="3.00" width="1.6" height="1.6"/><rect x="5.50" y="0.00" width="1.6" height="1.6"/><rect x="5.50" y="3.00" width="1.6" height="1.6"/><rect x="8.25" y="0.00" width="1.6" height="1.6"/><rect x="8.25" y="3.00" width="1.6" height="1.6"/><rect x="11.00" y="0.00" width="1.6" height="1.6"/><rect x="11.00" y="3.00" width="1.6" height="1.6"/><rect x="13.75" y="0.00" width="1.6" height="1.6"/><rect x="13.75" y="3.00" width="1.6" height="1.6"/><rect x="16.50" y="0.00" width="1.6" height="1.6"/><rect x="16.50" y="3.00" width="1.6" height="1.6"/></svg>
<svg style="left:45.0px;top:417.0px" width="19.2" height="6.0" fill="#5c5c5c"><rect x="0.00" y="0.00" width="1.6" height="1.6"/><rect x="0.00" y="3.00" width="1.6" height="1.6"/><rect x="2.75" y="0.00" width="1.6" height="1.6"/><rect x="2.75" y="3.00" width="1.6" height="1.6"/><rect x="5.50" y="0.00" width="1.6" height="1.6"/><rect x="5.50" y="3.00" width="1.6" height="1.6"/><rect x="8.25" y="0.00" width="1.6" height="1.6"/><rect x="8.25" y="3.00" width="1.6" height="1.6"/><rect x="11.00" y="0.00" width="1.6" height="1.6"/><rect x="11.00" y="3.00" width="1.6" height="1.6"/><rect x="13.75" y="0.00" width="1.6" height="1.6"/><rect x="13.75" y="3.00" width="1.6" height="1.6"/><rect x="16.50" y="0.00" width="1.6" height="1.6"/><rect x="16.50" y="3.00" width="1.6" height="1.6"/></svg>
<div class="a" style="left:37px;top:154px;width:31px;height:29px;background:#3d3d3d;border:1px solid #4a4a4a;border-radius:2px"></div>
<svg style="left:44.4px;top:156px" width="17" height="25" viewBox="0 0 17 25"><path d="M0.9,1L0.9,19.3L5.4,15.9L8.7,23.4L12.2,21.9L9.2,14.5L14.9,13.9Z" fill="#3d3d3d" stroke="#f2f2f2" stroke-width="1.7" stroke-linejoin="round"/></svg><svg style="left:43.1px;top:189px" width="17" height="25" viewBox="0 0 17 25"><g transform="translate(13.4 2.9) rotate(121.35)"><path d="M-0.6,-3.3H17.32L24.12,0L17.32,3.3H-0.6a3.3,3.3 0 0 1 0,-6.6Z" fill="#f2f2f2"/><path d="M18.12,-1.9L21.92,0L18.12,1.9Z" fill="#1e1e1e"/><path d="M3.2,-3.6V3.6" stroke="#1e1e1e" stroke-width="1.1"/></g></svg><svg style="left:40.2px;top:220.2px" width="25" height="25" viewBox="0 0 25 25"><rect x="1.5" y="1.5" width="21" height="20.6" fill="none" stroke="#f2f2f2" stroke-width="3"/><path d="M24,13V23.6H12.8Z" fill="#25bcc4"/></svg><svg style="left:40px;top:251px" width="25" height="26" viewBox="0 0 25 26"><path d="M1.20,7.30L9.25,2.00L18.30,5.20L23.20,14.80L15.70,23.90L1.20,23.90Z" fill="none" stroke="#f2f2f2" stroke-width="2.2" stroke-linejoin="round"/><circle cx="1.20" cy="7.30" r="1.7" fill="#f2f2f2"/><circle cx="9.25" cy="2.00" r="1.7" fill="#f2f2f2"/><circle cx="18.30" cy="5.20" r="1.7" fill="#f2f2f2"/><circle cx="23.20" cy="14.80" r="1.7" fill="#f2f2f2"/><circle cx="15.70" cy="23.90" r="1.7" fill="#f2f2f2"/><circle cx="1.20" cy="23.90" r="1.7" fill="#f2f2f2"/></svg><svg style="left:40px;top:284px" width="25" height="25" viewBox="0 0 25 25"><path d="M15.9,0.7C11.8,4.4 9.4,9.6 8.6,14.2L11.7,15.8C14.9,11.2 16.3,5.8 15.9,0.7Z" fill="#f2f2f2"/><path d="M24.1,9.5C19.6,9.2 15.6,10.8 12.1,13.1L13.3,15.8C17.9,15 21.8,12.9 24.1,9.5Z" fill="#f2f2f2"/><ellipse cx="3.7" cy="12.3" rx="2.9" ry="1.9" fill="none" stroke="#f2f2f2" stroke-width="1.6" transform="rotate(10 3.7 12.3)"/><ellipse cx="10.8" cy="19.3" rx="2.4" ry="3.7" fill="none" stroke="#f2f2f2" stroke-width="1.6" transform="rotate(-6 10.8 19.3)"/><path d="M6.4,13L10.8,14.4M10.4,15.8L11.4,13.6" stroke="#f2f2f2" stroke-width="1.8" fill="none"/></svg><svg style="left:41.2px;top:316.6px" width="23" height="23" viewBox="0 0 23 23"><path d="M0,0.9H22M0.8,6V21.4H9.1M12.8,21.4H21.2V6" fill="none" stroke="#f2f2f2" stroke-width="1.7"/></svg><div class="a" style="left:32.3px;top:347.4px;width:40px;height:26px;line-height:26px;text-align:center;font-weight:bold;font-size:24.2px;-webkit-text-stroke:0.55px;color:#f2f2f2">A</div><svg style="left:38px;top:380px" width="28" height="24" viewBox="0 0 28 24"><g transform="translate(14.15 12) rotate(-45)"><rect x="-13.05" y="-2.6" width="26.1" height="5.2" fill="none" stroke="#f2f2f2" stroke-width="1.45"/><path d="M-9.6,-2.6v2.3M-6.4,-2.6v2.3M-3.2,-2.6v2.3M0,-2.6v2.3M3.2,-2.6v2.3M6.4,-2.6v2.3M9.6,-2.6v2.3" stroke="#f2f2f2" stroke-width="0.9"/></g></svg><svg style="left:40px;top:427px" width="25" height="26" viewBox="0 0 25 26"><ellipse cx="12.5" cy="13.1" rx="10.9" ry="11.9" fill="none" stroke="#f2f2f2" stroke-width="0.8"/><ellipse cx="12.5" cy="13.1" rx="8.1" ry="9.2" fill="none" stroke="#f2f2f2" stroke-width="3.5"/><ellipse cx="12.5" cy="13.1" rx="5" ry="6.2" fill="none" stroke="#f2f2f2" stroke-width="0.8"/></svg><svg style="left:41.7px;top:467px" width="24" height="25" viewBox="0 0 24 25"><rect x="0.6" y="4.4" width="14.6" height="14.6" fill="none" stroke="#6c6c6c" stroke-width="1.3"/><rect x="8.6" y="0.6" width="13.6" height="14.6" fill="none" stroke="#6c6c6c" stroke-width="1.3"/><rect x="5.4" y="9" width="14.2" height="14.8" fill="none" stroke="#6c6c6c" stroke-width="1.3"/><path d="M8.6,4.4V9M15.2,9V15.2M8.6,15.2H5.4" stroke="#555" stroke-width="0.8" stroke-dasharray="1.4 0.8"/></svg><svg style="left:40.2px;top:499px" width="25" height="25" viewBox="0 0 25 25"><rect x="1.1" y="1.1" width="15.4" height="16.2" rx="1" fill="none" stroke="#f2f2f2" stroke-width="2.2"/><rect x="7.7" y="7.1" width="15.4" height="15.8" rx="1" fill="none" stroke="#f2f2f2" stroke-width="2.2"/><path d="M24.2,12.2V24H13.2Z" fill="#6ba3a7"/></svg><svg style="left:40.2px;top:538px" width="24" height="24" viewBox="0 0 24 24"><rect x="0" y="0" width="6" height="6" fill="#6c6c6c"/><rect x="0" y="9" width="6" height="6" fill="#6c6c6c"/><rect x="0" y="18" width="6" height="6" fill="#6c6c6c"/><rect x="9" y="0" width="6" height="6" fill="#6c6c6c"/><rect x="9" y="9" width="6" height="6" fill="#6c6c6c"/><rect x="9" y="18" width="6" height="6" fill="#6c6c6c"/><rect x="18" y="0" width="6" height="6" fill="#6c6c6c"/><rect x="18" y="9" width="6" height="6" fill="#6c6c6c"/><rect x="18" y="18" width="6" height="6" fill="#6c6c6c"/></svg><svg style="left:40.2px;top:570px" width="24" height="24" viewBox="0 0 24 24"><g transform="translate(12 12)"><rect x="-2.6" y="-12" width="5.2" height="5" fill="#6c6c6c" transform="rotate(0)"/><rect x="-2.2" y="-11.6" width="4.4" height="4.4" fill="none" stroke="#6c6c6c" stroke-width="1.1" transform="rotate(45)"/><rect x="-2.2" y="-11.6" width="4.4" height="4.4" fill="none" stroke="#6c6c6c" stroke-width="1.1" transform="rotate(90)"/><rect x="-2.2" y="-11.6" width="4.4" height="4.4" fill="none" stroke="#6c6c6c" stroke-width="1.1" transform="rotate(135)"/><rect x="-2.2" y="-11.6" width="4.4" height="4.4" fill="none" stroke="#6c6c6c" stroke-width="1.1" transform="rotate(180)"/><rect x="-2.2" y="-11.6" width="4.4" height="4.4" fill="none" stroke="#6c6c6c" stroke-width="1.1" transform="rotate(225)"/><rect x="-2.2" y="-11.6" width="4.4" height="4.4" fill="none" stroke="#6c6c6c" stroke-width="1.1" transform="rotate(270)"/><rect x="-2.2" y="-11.6" width="4.4" height="4.4" fill="none" stroke="#6c6c6c" stroke-width="1.1" transform="rotate(315)"/></g></svg><svg style="left:40px;top:608px" width="25" height="26" viewBox="0 0 25 26"><path d="M1.70,6.70L9.60,3.30L18.10,5.00L22.60,15.10L15.80,23.60L1.70,23.60Z" fill="none" stroke="#7c7c7c" stroke-width="2.2" stroke-linejoin="round"/><circle cx="1.70" cy="6.70" r="1.5" fill="#7c7c7c"/><circle cx="9.60" cy="3.30" r="1.5" fill="#7c7c7c"/><circle cx="18.10" cy="5.00" r="1.5" fill="#7c7c7c"/><circle cx="22.60" cy="15.10" r="1.5" fill="#7c7c7c"/><circle cx="15.80" cy="23.60" r="1.5" fill="#7c7c7c"/><circle cx="1.70" cy="23.60" r="1.5" fill="#7c7c7c"/><path d="M9.4,3.2L13,3.6" stroke="#f2f2f2" stroke-width="1.6"/><path d="M11.6,1.2L15.6,4.4L11.2,6.2Z" fill="#f2f2f2"/></svg><svg style="left:40px;top:641px" width="26" height="25" viewBox="0 0 26 25"><path d="M24.2,0.9L16,6.4C11,9.8 10.4,13 13.6,15.8L19.2,19.4" fill="none" stroke="#f2f2f2" stroke-width="1.9"/><path d="M14.6,7.2L0.8,11.6L12.6,17" fill="none" stroke="#f2f2f2" stroke-width="1.3" stroke-dasharray="2.2 1.1"/><path d="M24.4,12V24H12.4Z" fill="#25bcc4"/><path d="M24.4,12V24H12.4Z" fill="none"/></svg>
<div class="t" style="left:0;width:103px;top:668px;text-align:center;font-weight:bold;font-size:12px;letter-spacing:-0.15px;-webkit-text-stroke:0.1px">Radius:</div>
<div class="inp" style="left:5px;top:689px;width:81px;height:20px;padding-left:28px;color:#aaa">5.0</div>
<div class="sp" style="left:86px;top:689px;width:13px;height:20px"></div>
<div class="a" style="left:8px;top:461px;width:88px;height:1px;background:#232323"></div>
<div class="a" style="left:8px;top:531px;width:88px;height:1px;background:#232323"></div>
<div class="a" style="left:8px;top:603px;width:88px;height:1px;background:#232323"></div>
<div class="a" style="left:104px;top:140px;width:1121px;height:819px;background:#121212"></div>
<div class="a" id="cv" style="left:107px;top:143px;width:1118px;height:816px;background:#e8e8e8;overflow:hidden">
<div class="rl" style="left:63.2px;width:60px;text-align:center;top:4.5px">500</div>
<div class="rl" style="left:63.2px;width:60px;text-align:center;top:796px">500</div>
<div class="rl" style="left:143.7px;width:60px;text-align:center;top:4.5px">520</div>
<div class="rl" style="left:143.7px;width:60px;text-align:center;top:796px">520</div>
<div class="rl" style="left:224.3px;width:60px;text-align:center;top:4.5px">540</div>
<div class="rl" style="left:224.3px;width:60px;text-align:center;top:796px">540</div>
<div class="rl" style="left:304.8px;width:60px;text-align:center;top:4.5px">560</div>
<div class="rl" style="left:304.8px;width:60px;text-align:center;top:796px">560</div>
<div class="rl" style="left:385.3px;width:60px;text-align:center;top:4.5px">580</div>
<div class="rl" style="left:385.3px;width:60px;text-align:center;top:796px">580</div>
<div class="rl" style="left:465.9px;width:60px;text-align:center;top:4.5px">600</div>
<div class="rl" style="left:465.9px;width:60px;text-align:center;top:796px">600</div>
<div class="rl" style="left:546.4px;width:60px;text-align:center;top:4.5px">620</div>
<div class="rl" style="left:546.4px;width:60px;text-align:center;top:796px">620</div>
<div class="rl" style="left:626.9px;width:60px;text-align:center;top:4.5px">640</div>
<div class="rl" style="left:626.9px;width:60px;text-align:center;top:796px">640</div>
<div class="rl" style="left:707.4px;width:60px;text-align:center;top:4.5px">660</div>
<div class="rl" style="left:707.4px;width:60px;text-align:center;top:796px">660</div>
<div class="rl" style="left:788.0px;width:60px;text-align:center;top:4.5px">680</div>
<div class="rl" style="left:788.0px;width:60px;text-align:center;top:796px">680</div>
<div class="rl" style="left:868.5px;width:60px;text-align:center;top:4.5px">700</div>
<div class="rl" style="left:868.5px;width:60px;text-align:center;top:796px">700</div>
<div class="rl" style="left:949.0px;width:60px;text-align:center;top:4.5px">720</div>
<div class="rl" style="left:949.0px;width:60px;text-align:center;top:796px">720</div>
<div class="rl" style="left:1029.6px;width:60px;text-align:center;top:4.5px">740</div>
<div class="rl" style="left:1029.6px;width:60px;text-align:center;top:796px">740</div>
<div class="rl" style="left:-29.4px;width:60px;text-align:center;top:4.5px">477</div>
<div class="rl" style="left:-29.4px;width:60px;text-align:center;top:796px">477</div>
<div class="rl" style="left:3px;top:720.5px">1,100</div>
<div class="rl" style="right:5px;top:720.5px">1,100</div>
<div class="rl" style="left:3px;top:640.0px">1,120</div>
<div class="rl" style="right:5px;top:640.0px">1,120</div>
<div class="rl" style="left:3px;top:559.5px">1,140</div>
<div class="rl" style="right:5px;top:559.5px">1,140</div>
<div class="rl" style="left:3px;top:479.0px">1,160</div>
<div class="rl" style="right:5px;top:479.0px">1,160</div>
<div class="rl" style="left:3px;top:398.4px">1,180</div>
<div class="rl" style="right:5px;top:398.4px">1,180</div>
<div class="rl" style="left:3px;top:317.9px">1,200</div>
<div class="rl" style="right:5px;top:317.9px">1,200</div>
<div class="rl" style="left:3px;top:237.4px">1,220</div>
<div class="rl" style="right:5px;top:237.4px">1,220</div>
<div class="rl" style="left:3px;top:156.8px">1,240</div>
<div class="rl" style="right:5px;top:156.8px">1,240</div>
<div class="rl" style="left:3px;top:76.3px">1,260</div>
<div class="rl" style="right:5px;top:76.3px">1,260</div>
<div class="rl" style="left:3px;top:-4.2px">1,280</div>
<div class="rl" style="right:5px;top:-4.2px">1,280</div>
<svg style="left:0;top:0" width="1118" height="816"><rect x="428.25" y="143.80" width="213.27" height="209.25" rx="20.12" fill="none" stroke="#303030" stroke-width="1"/><rect x="448.37" y="163.92" width="173.03" height="169.01" fill="none" stroke="#2c2c2c" stroke-width="1.1"/><rect x="452.39" y="167.94" width="164.98" height="160.96" fill="none" stroke="#2c2c2c" stroke-width="1.1"/><rect x="456.42" y="171.97" width="156.94" height="152.91" fill="none" stroke="#2c2c2c" stroke-width="1.1"/><rect x="464.47" y="180.02" width="140.84" height="136.82" fill="none" stroke="#2c2c2c" stroke-width="1.1"/><rect x="472.51" y="188.06" width="124.74" height="120.72" fill="none" stroke="#2c2c2c" stroke-width="1.1"/><rect x="480.56" y="196.11" width="108.65" height="104.62" fill="none" stroke="#2c2c2c" stroke-width="1.1"/><rect x="488.61" y="204.16" width="92.55" height="88.53" fill="none" stroke="#2c2c2c" stroke-width="1.1"/><rect x="496.66" y="212.21" width="76.46" height="72.43" fill="none" stroke="#2c2c2c" stroke-width="1.1"/><rect x="504.71" y="220.26" width="60.36" height="56.34" fill="none" stroke="#2c2c2c" stroke-width="1.1"/></svg>
</div>
<svg style="left:0;top:0;filter:drop-shadow(2px 2.5px 2px rgba(0,0,0,0.7))" width="1728" height="1028"><path d="M696.1,120.2L719.8,124.6L711.8,132.4L756.8,198.4A1.5,1.5 0 0 1 754.4,200.3L702.6,138.7L692.9,143.6Z" fill="#6ee04c"/></svg>
<svg style="left:1231.1px;top:544.2px" width="3.0" height="18.5" fill="#5c5c5c"><rect x="0.00" y="0.00" width="1.6" height="1.6"/><rect x="0.00" y="3.08" width="1.6" height="1.6"/><rect x="0.00" y="6.16" width="1.6" height="1.6"/><rect x="0.00" y="9.24" width="1.6" height="1.6"/><rect x="0.00" y="12.32" width="1.6" height="1.6"/><rect x="0.00" y="15.40" width="1.6" height="1.6"/></svg>
<div class="hdr" style="left:1234px;top:140px;width:494px">Operations</div>
<svg style="left:1701px;top:144.2px" width="25" height="11"><rect x="0.5" y="0.5" width="10" height="10" rx="1.5" fill="none" stroke="rgba(118,98,124,0.95)" stroke-width="1"/><path d="M2,9L9,2M2,2L9,9M3.4,5.5L5.5,3.4L7.6,5.5L5.5,7.6Z" fill="none" stroke="rgba(118,98,124,0.95)" stroke-width="0.9"/><rect x="14.5" y="0.5" width="10" height="10" rx="1.5" fill="none" stroke="rgba(118,98,124,0.95)" stroke-width="1"/><path d="M16.4,2.4L22.6,8.6M22.6,2.4L16.4,8.6" fill="none" stroke="rgba(118,98,124,0.95)" stroke-width="1.4"/></svg>
<svg style="left:1701px;top:710.6px" width="25" height="11"><rect x="0.5" y="0.5" width="10" height="10" rx="1.5" fill="none" stroke="rgba(118,98,124,0.95)" stroke-width="1"/><path d="M2,9L9,2M2,2L9,9M3.4,5.5L5.5,3.4L7.6,5.5L5.5,7.6Z" fill="none" stroke="rgba(118,98,124,0.95)" stroke-width="0.9"/><rect x="14.5" y="0.5" width="10" height="10" rx="1.5" fill="none" stroke="rgba(118,98,124,0.95)" stroke-width="1"/><path d="M16.4,2.4L22.6,8.6M22.6,2.4L16.4,8.6" fill="none" stroke="rgba(118,98,124,0.95)" stroke-width="1.4"/></svg>
<div class="btn" style="left:1237px;top:162px;width:242px;height:24px">New Operation</div>
<div class="btn" style="left:1483px;top:162px;width:242px;height:24px"><svg class="il" width="16.6" height="17.8" viewBox="0 0 16.6 17.8" style="margin-right:2.8px;top:0px"><path d="M2.2,0.2L4.4,8.6V9.4H3.35V17.5H1.05V9.4H0V8.6Z" fill="#f2f2f2"/><path d="M8.7,0.2L9.6,2.2L11.9,1.8V6.6C11.9,8.6 10.6,9.8 9.8,11.2V17.5H7.6V11.2C6.8,9.8 5.5,8.6 5.5,6.6V1.8L7.8,2.2Z" fill="#f2f2f2"/><path d="M13.6,1L16.2,0.2V17.5H13.6Z" fill="#f2f2f2"/><path d="M13.4,4.4L16.4,2.6M13.4,8L16.4,6.2M13.4,11.6L16.4,9.8M13.4,15.2L16.4,13.4" stroke="#4f4f4f" stroke-width="0.9"/></svg>Edit Tools</div>
<div class="btn d" style="left:1237px;top:190px;width:242px;height:24px"><svg class="il" width="15.8" height="15.8" viewBox="0 0 15.8 15.8" style="margin-right:3.4px;top:0px"><path d="M0.6,15.2V0.6H15.2V15.2M0.6,15.2H5M10.8,15.2H15.2M7.9,0.6V15.4" fill="none" stroke="#5b5b5b" stroke-width="1.1"/></svg>Add Tabs</div>
<div class="btn" style="left:1483px;top:190px;width:242px;height:24px"><svg class="il" width="17.2" height="18.1" viewBox="0 0 17.2 18.1" style="margin-right:2.6px;top:0px"><rect x="0.95" y="0.95" width="15.3" height="12.5" rx="1.2" fill="none" stroke="#f2f2f2" stroke-width="1.9"/><path d="M6.4,14.2H10.8L11.4,16.6H13.4a0.7,0.7 0 0 1 0,1.4H3.8a0.7,0.7 0 0 1 0,-1.4H5.8Z" fill="#f2f2f2"/></svg>Preview</div>
<div class="t " style="left:1236px;top:216px;">Operation Shapes:</div>
<div class="btn d" style="left:1237px;top:236px;width:242px;height:24px"><svg class="il" width="17.7" height="17.7" viewBox="0 0 17.7 17.7" style="margin-right:2px;top:0px"><path d="M1,4.8V3.6a2.6,2.6 0 0 1 2.6,-2.6H4.8M7,1H10.7M12.9,1H14.1a2.6,2.6 0 0 1 2.6,2.6V4.8M16.7,7V10.7M16.7,12.9V14.1a2.6,2.6 0 0 1 -2.6,2.6H12.9M10.7,16.7H7M4.8,16.7H3.6a2.6,2.6 0 0 1 -2.6,-2.6V12.9M1,10.7V7" fill="none" stroke="#6c6c6c" stroke-width="2"/></svg>Select</div>
<div class="btn d" style="left:1483px;top:236px;width:242px;height:24px"><svg class="il" width="11.7" height="17.1" viewBox="0 0 11.7 17.1" style="margin-right:5.8px;top:0px"><path d="M2.4,1.6L9,8.55L2.4,15.5" fill="none" stroke="#6c6c6c" stroke-width="3.6"/></svg>Assign</div>
<div class="btn d" style="left:1237px;top:264px;width:242px;height:24px"><svg class="il" width="17.5" height="17.5" viewBox="0 0 17.5 17.5" style="margin-right:2.6px;top:0px"><circle cx="8.75" cy="8.75" r="8" fill="none" stroke="#6c6c6c" stroke-width="1.3"/><path d="M8.75,4.4V13.1M4.4,8.75H13.1" stroke="#6c6c6c" stroke-width="1.7"/></svg>Add</div>
<div class="btn d" style="left:1483px;top:264px;width:242px;height:24px"><svg class="il" width="17.5" height="17.5" viewBox="0 0 17.5 17.5" style="margin-right:2.8px;top:0px"><circle cx="8.75" cy="8.75" r="8" fill="none" stroke="#6c6c6c" stroke-width="1.3"/><path d="M4.4,8.75H13.1" stroke="#6c6c6c" stroke-width="1.7"/></svg>Remove</div>
<div class="a" style="left:1237px;top:292px;width:455.5px;height:243px;background:#2d2d2d"></div>
<div class="a" style="left:1237px;top:292px;width:455.5px;height:18.5px;background:linear-gradient(#484848,#424242);border-bottom:1px solid #2a2a2a"></div>
<div class="a" style="left:1414.5px;top:292px;width:1px;height:18px;background:#5a5a5a"></div>
<div class="a" style="left:1494.5px;top:292px;width:1px;height:18px;background:#5a5a5a"></div>
<div class="a" style="left:1634.5px;top:292px;width:1px;height:18px;background:#5a5a5a"></div>
<div class="t " style="left:1239px;top:292.4px;">Operation</div>
<div class="t " style="left:1419px;top:292.4px;">Mode</div>
<div class="t " style="left:1499.5px;top:292.4px;">Tool</div>
<div class="t " style="left:1639px;top:292.4px;">Output</div>
<div class="btn d" style="left:1697px;top:292px;width:28px;height:23px"><svg class="il" width="18" height="10" viewBox="0 0 18 10" style="margin-right:0px;top:0px;margin-left:0"><path d="M1.8,8.6L9,1.8L16.2,8.6" fill="none" stroke="#6c6c6c" stroke-width="3.4"/></svg></div>
<div class="btn d" style="left:1697px;top:321px;width:28px;height:23.5px"><svg class="il" width="18" height="10" viewBox="0 0 18 10" style="margin-right:0px;top:0px;margin-left:0"><path d="M1.8,1.4L9,8.2L16.2,1.4" fill="none" stroke="#6c6c6c" stroke-width="3.4"/></svg></div>
<div class="btn d" style="left:1697px;top:423px;width:28px;height:23.5px"><svg class="il" width="15" height="17" viewBox="0 0 15 17" style="margin-right:0px;top:0px;margin-left:0"><path d="M0.4,3.6H14.6M5,3V1.6a0.9,0.9 0 0 1 0.9,-0.9H9.1a0.9,0.9 0 0 1 0.9,0.9V3" fill="none" stroke="#686868" stroke-width="1.5"/><path d="M2.2,4.6V15a1.2,1.2 0 0 0 1.2,1.2H11.6a1.2,1.2 0 0 0 1.2,-1.2V4.6" fill="none" stroke="#686868" stroke-width="1.3"/><path d="M5,6V14.4M7.5,6V14.4M10,6V14.4" stroke="#686868" stroke-width="1.1"/></svg></div>
<div class="btn d" style="left:1697px;top:524.5px;width:28px;height:22.5px"><svg class="il" width="19" height="18" viewBox="0 0 19 18" style="margin-right:0px;top:0px;margin-left:0"><path d="M6.4,0.7H2.6a1.8,1.8 0 0 0 -1.8,1.8V11.4a1.8,1.8 0 0 0 1.8,1.8H7" fill="none" stroke="#686868" stroke-width="1.2"/><path d="M3.2,6h3.2M3.2,8.2h3.2M3.2,10.4h3.2" stroke="#686868" stroke-width="1"/><path d="M14,4.6H9.6a1.6,1.6 0 0 0 -1.6,1.6V15.6a1.6,1.6 0 0 0 1.6,1.6H16.4a1.6,1.6 0 0 0 1.6,-1.6V8.6Z" fill="#4c4c4c" stroke="#686868" stroke-width="1.2"/><path d="M10.4,10.6h5M10.4,12.6h5M10.4,14.6h5" stroke="#686868" stroke-width="1"/><path d="M6.6,0.8C8,1 8.8,1.6 9.4,2.8" fill="none" stroke="#686868" stroke-width="1.1"/></svg></div>
<div class="a" style="left:1237px;top:535px;width:455.5px;height:12.5px;background:#2a2a2a"></div>
<div class="a" style="left:1251px;top:535px;width:421px;height:12.5px;background:#4a4a4a;border-radius:1px"></div>
<div class="a" style="left:1237.5px;top:535px;width:12px;height:12.5px;background:#3a3a3a"></div>
<div class="a" style="left:1679px;top:535px;width:13px;height:12.5px;background:#3a3a3a"></div>
<div class="a" style="left:1240px;top:537.5px;border:4px solid transparent;border-right:5px solid #c8c8c8;border-left:0"></div>
<div class="a" style="left:1683.5px;top:537.5px;border:4px solid transparent;border-left:5px solid #c8c8c8;border-right:0"></div>
<div class="t " style="left:1237.5px;top:549.6px;">Selected Operation Info:</div>
<div class="a" style="left:1237px;top:571.5px;width:491px;height:97px;border:1px solid #2b2b2b;border-radius:3px"></div>
<div class="t " style="left:1241px;top:586.5px;">Tool Info:</div>
<div class="t " style="left:1241px;top:619.5px;">Start Depth:</div>
<div class="inp" style="left:1314.3px;top:620px;width:186.7px;height:19px;color:#9a9a9a;line-height:16px;">0.00mm</div>
<div class="sp" style="left:1501px;top:620px;width:14px;height:19px"></div>
<div class="t " style="left:1241px;top:643.3px;">Final Depth:</div>
<div class="inp" style="left:1314.3px;top:643.5px;width:186.7px;height:19.5px;color:#9a9a9a;line-height:16.5px;">0.00mm</div>
<div class="sp" style="left:1501px;top:643.5px;width:14px;height:19.5px"></div>
<div class="tab" style="left:1235.5px;width:72.0px;top:673px;height:25.3px;line-height:26px;background:#1e1e1e;border-color:#383838;border-top-color:#1e1e1e">Opera...</div>
<div class="tab" style="left:1310px;width:55px;">Co...</div>
<div class="tab" style="left:1368px;width:81.5px;">Variable...</div>
<div class="tab" style="left:1452px;width:51px;">Mo...</div>
<div class="tab" style="left:1506px;width:51.5px;">Ma...</div>
<div class="tab" style="left:1560px;width:47.5px;">La...</div>
<div class="tab" style="left:1610.5px;width:117.5px;">Operations Li...</div>
<svg style="left:1474.2px;top:702.9px" width="18.6" height="3.0" fill="#5a5a5a"><rect x="0.00" y="0.00" width="1.6" height="1.6"/><rect x="3.10" y="0.00" width="1.6" height="1.6"/><rect x="6.20" y="0.00" width="1.6" height="1.6"/><rect x="9.30" y="0.00" width="1.6" height="1.6"/><rect x="12.40" y="0.00" width="1.6" height="1.6"/><rect x="15.50" y="0.00" width="1.6" height="1.6"/></svg>
<div class="hdr" style="left:1234px;top:707px;width:494px">Job Control</div>
<div class="t " style="left:1234.7px;top:726.3px;">Disconnected</div>
<div class="btn " style="left:1236px;top:748.5px;width:119px;height:35.5px"><svg class="il" width="16.3" height="17.4" viewBox="0 0 16.3 17.4" style="margin-right:2.9px;top:0px"><rect x="0" y="0" width="6.9" height="17.4" rx="0.9" fill="#f2f2f2"/><rect x="9.7" y="0" width="6.6" height="17.4" rx="0.9" fill="#f2f2f2"/></svg>Pause</div>
<div class="btn " style="left:1360px;top:748.5px;width:119px;height:35.5px"><svg class="il" width="17.2" height="13.6" viewBox="0 0 17.2 13.6" style="margin-right:2.8px;top:0px"><rect x="0" y="0" width="4" height="13.6" fill="#f2f2f2"/><path d="M5.8,0L17.2,6.8L5.8,13.6Z" fill="#f2f2f2"/></svg>Resume</div>
<div class="btn " style="left:1484px;top:748.5px;width:118px;height:35.5px"><svg class="il" width="18.4" height="18" viewBox="0 0 18.4 18" style="margin-right:1.8px;top:0px"><rect x="0" y="0" width="18.4" height="18" rx="1.2" fill="#f2f2f2"/></svg>Stop</div>
<div class="btn d" style="left:1607.5px;top:748.5px;width:118.5px;height:35.5px"><svg class="il" width="15.8" height="18" viewBox="0 0 15.8 18" style="margin-right:3.2px;top:0px"><path d="M0,0L15.8,9L0,18Z" fill="#707070"/></svg>Process</div>
<div class="btn" style="left:1236px;top:787.5px;width:119px;height:36px"><svg class="il" width="18" height="17.8" viewBox="0 0 18 17.8" style="margin-right:2.2px;top:0px"><path d="M1.3,7V1.3H7M10.6,1.3H16.7V7M16.7,10.6V16.5H10.6M7,16.5H1.3V10.6" fill="none" stroke="#f2f2f2" stroke-width="2.6"/></svg>Frame</div>
<div class="btn" style="left:1360px;top:787.5px;width:119px;height:36px"><svg class="il" width="17.4" height="17.4" viewBox="0 0 17.4 17.4" style="margin-right:2.9px;top:0px"><circle cx="8.7" cy="8.7" r="7.6" fill="none" stroke="#f2f2f2" stroke-width="2" stroke-dasharray="3.9 2.07" stroke-dashoffset="1.9"/></svg>Frame</div>
<div class="btn" style="left:1484px;top:787.5px;width:118px;height:36px">Save GCode</div>
<div class="btn" style="left:1607.5px;top:787.5px;width:118.5px;height:36px">Run GCode</div>
<div class="btn" style="left:1236px;top:827.5px;width:243.5px;height:21px"><svg class="il" width="18.6" height="16" viewBox="0 0 18.6 16" style="margin-right:2px;top:0px"><path d="M0.8,9L9.5,1.2L18,9" fill="none" stroke="#f2f2f2" stroke-width="1.9" stroke-linejoin="miter"/><path d="M3.4,3.4V1.2H5.4V4" fill="none" stroke="#f2f2f2" stroke-width="1.4"/><path d="M3.3,8.4V15H7.6V10.2H11.4V15H15.6V8.4" fill="none" stroke="#f2f2f2" stroke-width="2"/></svg>Home</div>
<div class="btn" style="left:1483px;top:827.5px;width:243px;height:21px"><svg class="il" width="17.2" height="17.2" viewBox="0 0 17.2 17.2" style="margin-right:2.5px;top:0px"><path d="M8.6,0V4M8.6,13.2V17.2M0,8.6H3.2M14,8.6H17.2" stroke="#f2f2f2" stroke-width="1.7"/><path d="M8.6,5.4V11.8M5.4,8.6H11.8" stroke="#e8392a" stroke-width="1.9"/></svg>Show Last Position</div>
<div class="btn" style="left:1236px;top:852px;width:77.5px;height:21.5px">Devices</div>
<div class="cmb" style="left:1317px;top:852px;width:202.5px;height:21.5px;color:#fff;line-height:20px">cu.usbserial-210</div>
<div class="cmb" style="left:1523px;top:852px;width:203px;height:21.5px;color:#fff;line-height:20px;padding-left:23px"><svg style="left:5px;top:2.4px" width="16" height="16.2" viewBox="0 0 16 16.2"><defs><linearGradient id="lg" x1="0" y1="0" x2="0" y2="1"><stop offset="0" stop-color="#4a2390"/><stop offset="1" stop-color="#9a45b8"/></linearGradient></defs><rect x="0" y="0" width="16" height="16.2" fill="url(#lg)"/><path d="M1.6,1.2H4.8L7.4,8.6L6.2,11.4ZM14.4,1.2H11.4L8.4,9.4L9.6,11.6Z" fill="#f2f2f2"/><path d="M7.4,9.6L5.4,14.8M8.6,9.6L10.8,14.8" stroke="#f2f2f2" stroke-width="1.3"/><circle cx="5.4" cy="13.6" r="1.3" fill="none" stroke="#f2f2f2" stroke-width="0.9"/><circle cx="10.6" cy="13.6" r="1.3" fill="none" stroke="#f2f2f2" stroke-width="0.9"/></svg>Lunyee 3018 Pro Max</div>
<div class="btn" style="left:1236px;top:877.5px;width:490px;height:21px">Control Mode</div>
<div class="tg gr" style="left:1235.5px;top:906.0999999999999px"><i></i></div>
<div class="t " style="left:1257px;top:901.3px;">Require Control Mode before Start/Send</div>
<div class="a" style="left:0;top:961px;width:1728px;height:2px;background:#343434"></div>
<svg style="left:5.3px;top:973.0px" width="6.0" height="19.1" fill="#5c5c5c"><rect x="0.00" y="0.00" width="1.6" height="1.6"/><rect x="0.00" y="2.73" width="1.6" height="1.6"/><rect x="0.00" y="5.46" width="1.6" height="1.6"/><rect x="0.00" y="8.19" width="1.6" height="1.6"/><rect x="0.00" y="10.92" width="1.6" height="1.6"/><rect x="0.00" y="13.65" width="1.6" height="1.6"/><rect x="0.00" y="16.38" width="1.6" height="1.6"/><rect x="3.00" y="0.00" width="1.6" height="1.6"/><rect x="3.00" y="2.73" width="1.6" height="1.6"/><rect x="3.00" y="5.46" width="1.6" height="1.6"/><rect x="3.00" y="8.19" width="1.6" height="1.6"/><rect x="3.00" y="10.92" width="1.6" height="1.6"/><rect x="3.00" y="13.65" width="1.6" height="1.6"/><rect x="3.00" y="16.38" width="1.6" height="1.6"/></svg>
<div class="a" style="left:14px;top:967px;width:30px;height:29px;background:#2c2c2c;border:2px solid #484848;border-radius:3px"></div>
<div class="sw" style="left:17px;top:969px;width:24px;height:24px;line-height:24px;background:#000000;color:#fff;font-size:16px;letter-spacing:0.9px;text-indent:0.9px">00</div>
<div class="sw" style="left:52px;background:#0000ff;color:#fff">01</div>
<div class="sw" style="left:85px;background:#ff0000;color:#fff">02</div>
<div class="sw" style="left:118px;background:#00e000;color:#000">03</div>
<div class="sw" style="left:151px;background:#d0d000;color:#000">04</div>
<div class="sw" style="left:184px;background:#ff8000;color:#000">05</div>
<div class="sw" style="left:217px;background:#00e0e0;color:#000">06</div>
<div class="sw" style="left:250px;background:#ff00ff;color:#fff">07</div>
<div class="sw" style="left:283px;background:#b4b4b4;color:#000">08</div>
<div class="sw" style="left:316px;background:#0000a0;color:#fff">09</div>
<div class="sw" style="left:349px;background:#a00000;color:#fff">10</div>
<div class="sw" style="left:382px;background:#00a000;color:#fff">11</div>
<div class="sw" style="left:415px;background:#a0a000;color:#000">12</div>
<div class="sw" style="left:448px;background:#c08000;color:#000">13</div>
<div class="sw" style="left:481px;background:#00a0ff;color:#fff">14</div>
<div class="sw" style="left:514px;background:#a000a0;color:#fff">15</div>
<div class="sw" style="left:547px;background:#808080;color:#fff">16</div>
<div class="sw" style="left:580px;background:#7d87b9;color:#000">17</div>
<div class="sw" style="left:613px;background:#bb7784;color:#000">18</div>
<div class="sw" style="left:646px;background:#4a6fe3;color:#fff">19</div>
<div class="sw" style="left:679px;background:#d33f6a;color:#fff">20</div>
<div class="sw" style="left:712px;background:#8cd78c;color:#000">21</div>
<div class="sw" style="left:745px;background:#f0b98d;color:#000">22</div>
<div class="sw" style="left:778px;background:#f6c4e1;color:#000">23</div>
<div class="sw" style="left:811px;background:#fa9ed4;color:#000">24</div>
<div class="sw" style="left:844px;background:#500a78;color:#fff">25</div>
<div class="sw" style="left:877px;background:#b45a00;color:#fff">26</div>
<div class="sw" style="left:910px;background:#004754;color:#fff">27</div>
<div class="sw" style="left:943px;background:#86fa88;color:#000">28</div>
<div class="sw" style="left:976px;background:#ffdb66;color:#000">29</div>
<div class="sw" style="left:1016px;background:#f36926;color:#000">T1</div>
<div class="sw" style="left:1049px;background:#0c96d9;color:#fff">T2</div>
<div class="a" style="left:0;top:999px;width:1728px;height:1px;background:#4a4a4a"></div>
<div class="tg gr" style="left:2.4px;top:1008.8px"><i></i></div>
<div class="t " style="left:24.5px;top:1004px;">Move</div>
<div class="tg gr" style="left:71.4px;top:1008.8px"><i></i></div>
<div class="t " style="left:93px;top:1004px;">Size</div>
<div class="tg gr" style="left:133.3px;top:1008.8px"><i></i></div>
<div class="t " style="left:155px;top:1004px;">Rotate</div>
<div class="tg gr" style="left:208.4px;top:1008.8px"><i></i></div>
<div class="t " style="left:230px;top:1004px;">Shear</div>
<div class="t " style="left:290px;top:1004px;">x: 491.00, y: 1,223.00 mm</div>
<div class="a" style="left:0;top:0;width:1728px;height:1025.6px;border:1px solid #474747;border-top-color:#454544;border-radius:10px;pointer-events:none"></div>
</div></body></html>
